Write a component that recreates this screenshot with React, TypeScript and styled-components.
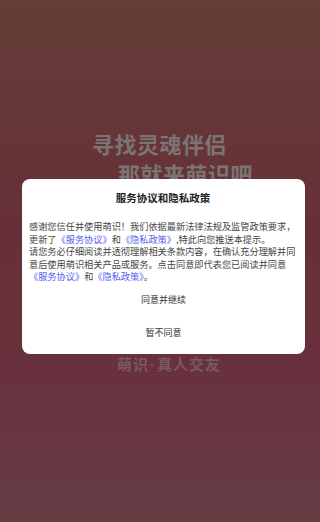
import React, { FunctionComponent } from 'react';
import styled, { createGlobalStyle } from 'styled-components';

const GlobalStyle = createGlobalStyle`
  html, body {
    margin: 0;
    padding: 0;
  }
  body {
    font-family: "Noto Sans CJK SC", "Noto Sans", sans-serif;
  }
`;

const Page = styled.div`
  position: relative;
  width: 320px;
  height: 522px;
  overflow: hidden;
  display: flex;
  flex-direction: column;
  background: linear-gradient(180deg, #643e38 0%, #672f37 45%, #69303d 70%, #663e45 100%);
`;

const Hero = styled.div`
  display: flex;
  flex-direction: column;
  padding: 128px 0 0 92px;
`;

const Slogan = styled.div<{ indent?: number }>`
  font-size: 22px;
  line-height: 30px;
  font-weight: 700;
  letter-spacing: 0.5px;
  color: #7c7474;
  padding-left: ${(p) => p.indent || 0}px;
`;

const Tagline = styled.div`
  margin-top: auto;
  margin-bottom: 148px;
  text-align: center;
  padding-left: 18px;
  font-size: 15px;
  font-weight: 700;
  letter-spacing: 1px;
  color: #7a5860;
`;

const Dot = styled.span`
  font-family: "Liberation Sans", sans-serif;
  margin: 0 1px;
`;

const Mask = styled.div`
  position: absolute;
  inset: 0;
  display: flex;
  flex-direction: column;
  padding-top: 179px;
`;

const Dialog = styled.div`
  margin-left: 22px;
  width: 283px;
  box-sizing: border-box;
  background: #fff;
  border-radius: 8px;
  padding: 12px 8px 5px 7px;
  display: flex;
  flex-direction: column;
`;

const Title = styled.h2`
  margin: 0 0 15px;
  text-align: center;
  font-size: 10.5px;
  line-height: 14px;
  font-weight: 700;
  color: #222;
`;

const Body = styled.p`
  margin: 0;
  font-size: 9.2px;
  line-height: 12.5px;
  color: #444;
  white-space: nowrap;
`;

const Link = styled.span`
  color: #5b5bf0;
`;

const Action = styled.button`
  border: 0;
  background: none;
  height: 33px;
  padding: 0 0 0 1px;
  font-family: inherit;
  font-size: 9px;
  color: #333;
  cursor: pointer;
`;

const App: FunctionComponent = () => (
  <>
    <GlobalStyle />
    <Page>
      <Hero>
        <Slogan>寻找灵魂伴侣</Slogan>
        <Slogan indent={26}>那就来萌识吧</Slogan>
      </Hero>
      <Tagline>
        萌识
        <Dot>·</Dot>
        真人交友
      </Tagline>
      <Mask>
        <Dialog>
          <Title>服务协议和隐私政策</Title>
          <Body>
            感谢您信任并使用萌识！我们依据最新法律法规及监管政策要求，
            <br />
            更新了
            <Link>《服务协议》</Link>
            和
            <Link>《隐私政策》</Link>
            ,特此向您推送本提示。
            <br />
            请您务必仔细阅读并透彻理解相关条款内容，在确认充分理解并同
            <br />
            意后使用萌识相关产品或服务。点击同意即代表您已阅读并同意
            <br />
            <Link>《服务协议》</Link>
            和
            <Link>《隐私政策》</Link>
            。
          </Body>
          <Action type="button">同意并继续</Action>
          <Action type="button">暂不同意</Action>
        </Dialog>
      </Mask>
    </Page>
  </>
);

export default App;
